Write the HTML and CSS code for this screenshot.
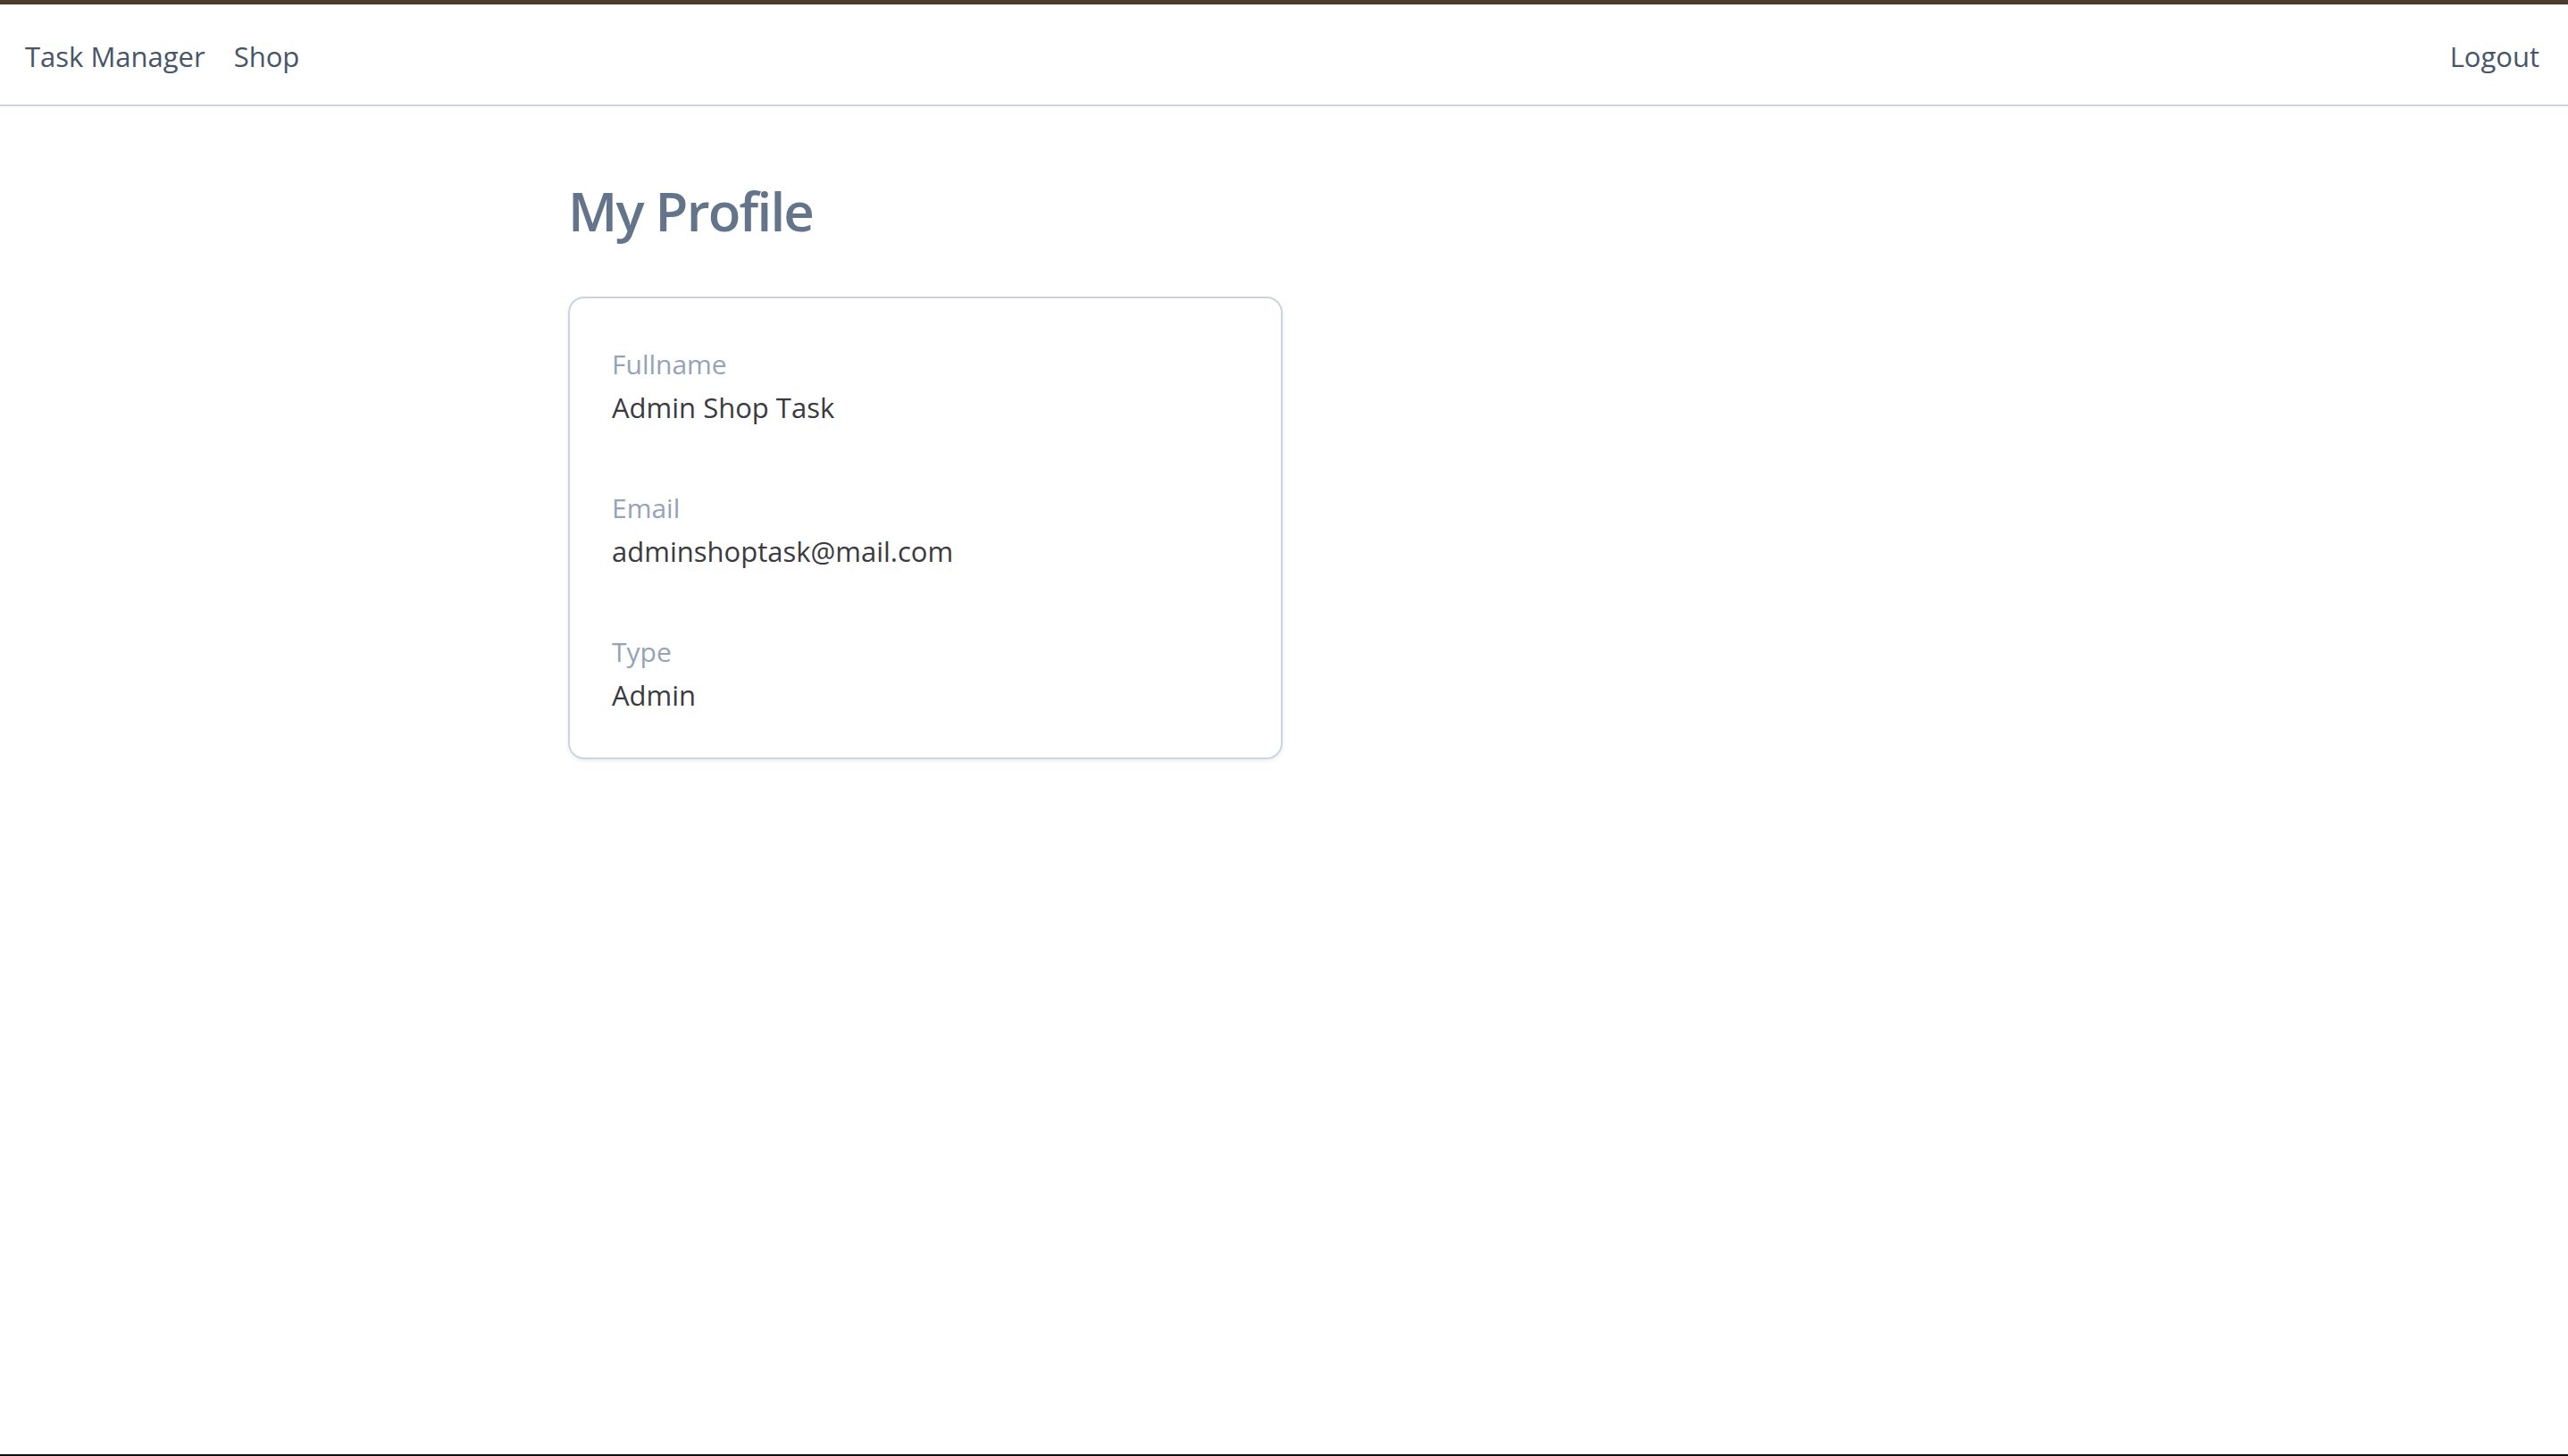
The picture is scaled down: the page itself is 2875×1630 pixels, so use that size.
FILE: index.html
```html
<!DOCTYPE html>
<html lang="en">
<head>
<meta charset="utf-8">
<title>My Profile</title>
<link rel="stylesheet" href="styles.css">
</head>
<body>
<div class="page">
  <div class="top-strip"></div>
  <nav class="navbar">
    <div class="nav-left">
      <a class="nav-link" href="#">Task Manager</a>
      <a class="nav-link" href="#">Shop</a>
    </div>
    <a class="nav-link" href="#">Logout</a>
  </nav>
  <main class="container">
    <h1 class="title">My Profile</h1>
    <section class="card">
      <div class="field">
        <div class="label">Fullname</div>
        <div class="value">Admin Shop Task</div>
      </div>
      <div class="field">
        <div class="label">Email</div>
        <div class="value">adminshoptask@mail.com</div>
      </div>
      <div class="field">
        <div class="label">Type</div>
        <div class="value">Admin</div>
      </div>
    </section>
  </main>
  <div class="bottom-line"></div>
</div>
</body>
</html>
```

FILE: styles.css
```css
html, body {
  margin: 0;
  padding: 0;
  background: #ffffff;
}

body {
  font-family: "Open Sans", "Noto Sans", sans-serif;
}

.page {
  min-height: 100vh;
  display: flex;
  flex-direction: column;
  box-sizing: border-box;
}

.top-strip {
  height: 5px;
  background: #4b3d2b;
}

.navbar {
  height: 114px;
  box-sizing: border-box;
  border-bottom: 2px solid #cbd5e1;
  display: flex;
  align-items: center;
  justify-content: space-between;
  padding: 3px 32px 0 28px;
}

.nav-left {
  display: flex;
  gap: 32px;
}

.nav-link {
  color: #475569;
  text-decoration: none;
  font-size: 31px;
  line-height: 40px;
}

.container {
  width: 1603px;
  margin: 0 auto;
  padding-top: 81px;
  flex: 1;
}

.title {
  margin: 0 0 60px 0;
  font-size: 60px;
  line-height: 72px;
  font-weight: 600;
  letter-spacing: -1.8px;
  color: #64748b;
}

.card {
  width: 800px;
  box-sizing: border-box;
  border: 2px solid #cbd5e1;
  border-radius: 18px;
  padding: 50px 47px 46px 47px;
  box-shadow: 0 2px 4px rgba(15, 23, 42, 0.08);
  display: flex;
  flex-direction: column;
  gap: 65px;
}

.label {
  font-size: 30px;
  line-height: 48px;
  color: #94a3b8;
}

.value {
  font-size: 31px;
  line-height: 48px;
  color: #3a3a3f;
}

.bottom-line {
  height: 2px;
  background: #111111;
}
```
